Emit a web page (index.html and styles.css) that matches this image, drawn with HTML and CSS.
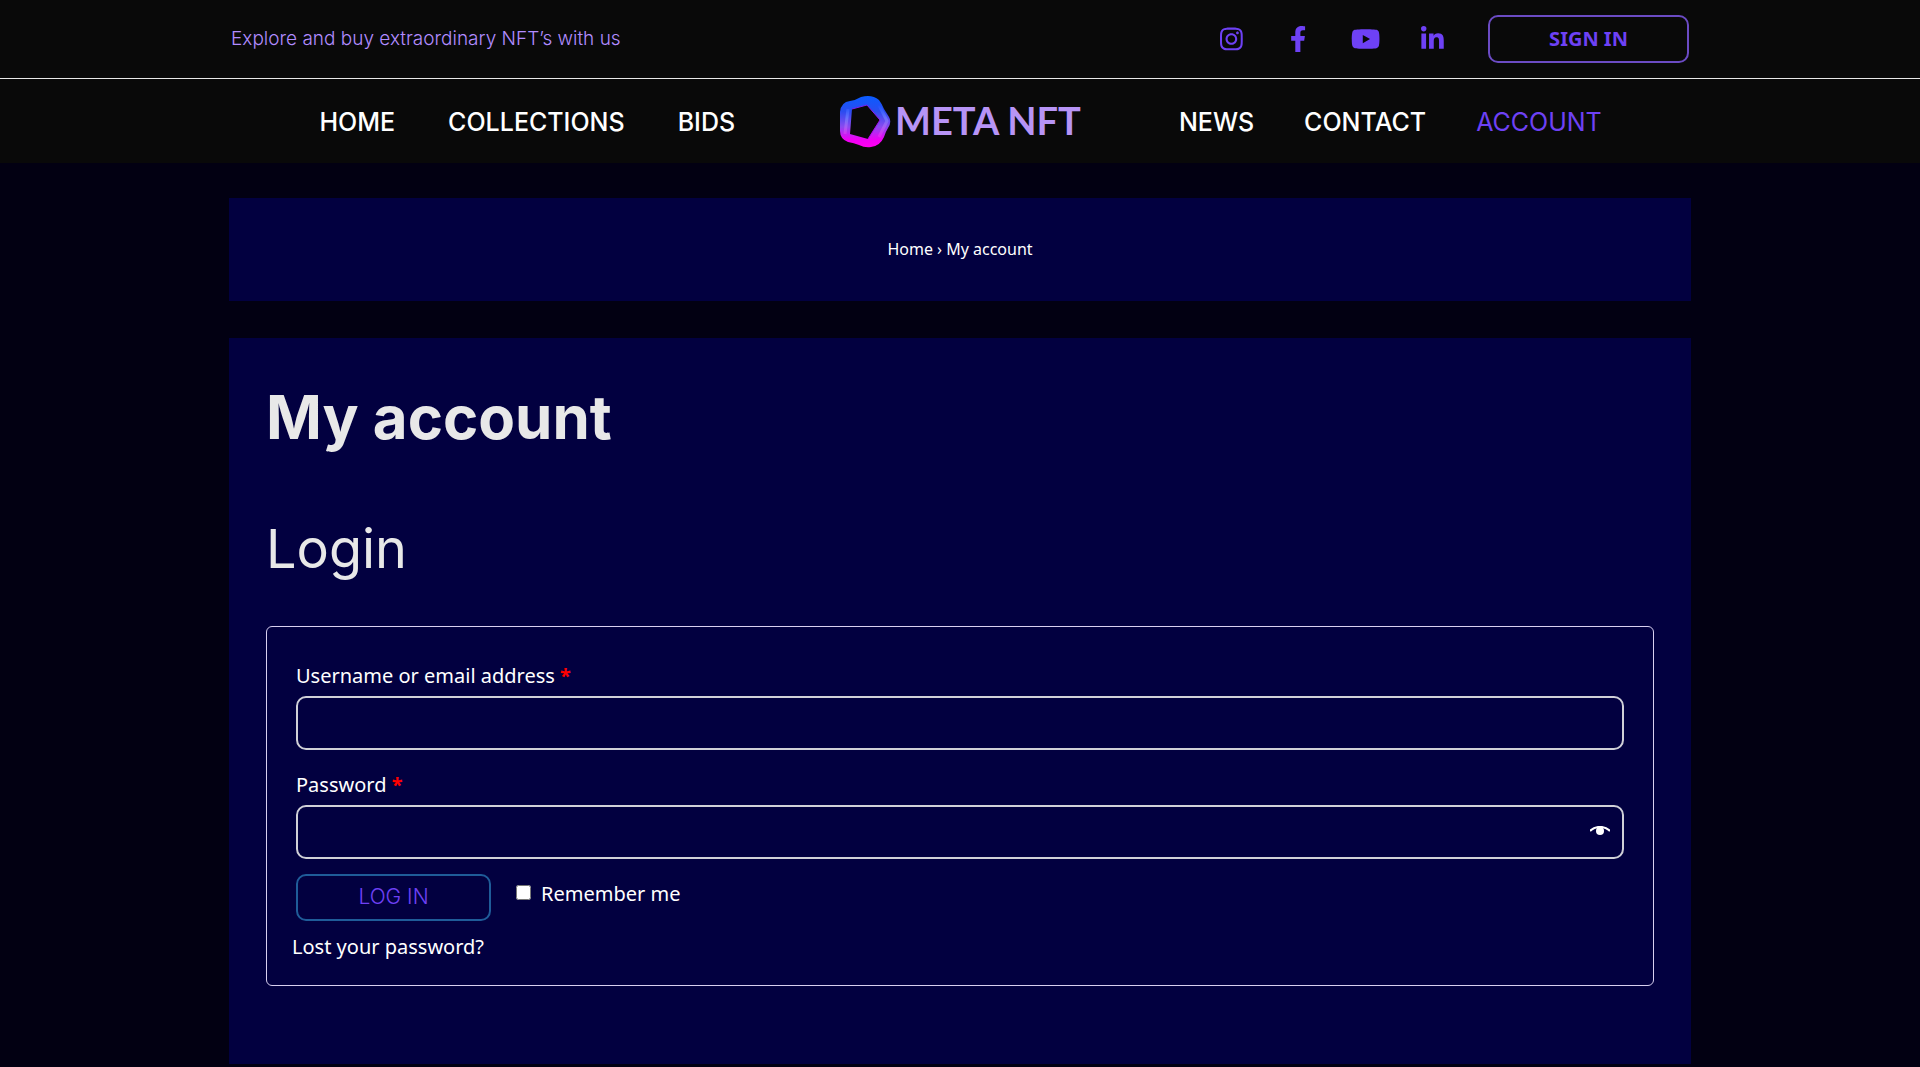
FILE: index.html
```html
<!DOCTYPE html>
<html lang="en">
<head>
  <meta charset="UTF-8">
  <title>My account - Meta NFT</title>
  <link rel="stylesheet" href="styles.css">
</head>
<body>

  <header>
    <div class="top-bar">
      <div class="container top-inner">
        <p class="tagline">Explore and buy extraordinary NFT’s with us</p>
        <div class="top-right">
          <div class="social">
            <a href="#" aria-label="Instagram">
              <svg viewBox="0 0 448 512"><path d="M224.1 141c-63.6 0-114.9 51.3-114.9 114.9s51.3 114.9 114.9 114.9S339 319.5 339 255.9 287.7 141 224.1 141zm0 189.6c-41.1 0-74.7-33.5-74.7-74.7s33.5-74.7 74.7-74.7 74.7 33.5 74.7 74.7-33.6 74.7-74.7 74.7zm146.4-194.3c0 14.9-12 26.8-26.8 26.8-14.9 0-26.8-12-26.8-26.8s12-26.8 26.8-26.8 26.8 12 26.8 26.8zm76.1 27.2c-1.7-35.9-9.9-67.7-36.2-93.9-26.2-26.2-58-34.4-93.9-36.2-37-2.1-147.9-2.1-184.9 0-35.8 1.7-67.6 9.9-93.9 36.1s-34.4 58-36.2 93.9c-2.1 37-2.1 147.9 0 184.9 1.7 35.9 9.9 67.7 36.2 93.9s58 34.4 93.9 36.2c37 2.1 147.9 2.1 184.9 0 35.9-1.7 67.7-9.9 93.9-36.2 26.2-26.2 34.4-58 36.2-93.9 2.1-37 2.1-147.8 0-184.8zM398.8 388c-7.8 19.6-22.9 34.7-42.6 42.6-29.5 11.7-99.5 9-132.1 9s-102.7 2.6-132.1-9c-19.6-7.8-34.7-22.9-42.6-42.6-11.7-29.5-9-99.5-9-132.1s-2.6-102.7 9-132.1c7.8-19.6 22.9-34.7 42.6-42.6 29.5-11.7 99.5-9 132.1-9s102.7-2.6 132.1 9c19.6 7.8 34.7 22.9 42.6 42.6 11.7 29.5 9 99.5 9 132.1s2.7 102.7-9 132.1z"/></svg>
            </a>
            <a href="#" aria-label="Facebook">
              <svg viewBox="0 0 320 512"><path d="M279.14 288l14.22-92.66h-88.91v-60.13c0-25.35 12.42-50.06 52.24-50.06h40.42V6.26S260.43 0 225.36 0c-73.22 0-121.08 44.38-121.08 124.72v70.62H22.89V288h81.39v224h100.17V288z"/></svg>
            </a>
            <a href="#" aria-label="YouTube">
              <svg viewBox="0 0 576 512"><path d="M549.655 124.083c-6.281-23.65-24.787-42.276-48.284-48.597C458.781 64 288 64 288 64S117.22 64 74.629 75.486c-23.497 6.322-42.003 24.947-48.284 48.597-11.412 42.867-11.412 132.305-11.412 132.305s0 89.438 11.412 132.305c6.281 23.65 24.787 41.5 48.284 47.821C117.22 448 288 448 288 448s170.78 0 213.371-11.486c23.497-6.321 42.003-24.171 48.284-47.821 11.412-42.867 11.412-132.305 11.412-132.305s0-89.438-11.412-132.305zm-317.51 213.508V175.185l142.739 81.205-142.739 81.201z"/></svg>
            </a>
            <a href="#" aria-label="LinkedIn">
              <svg viewBox="0 0 448 512"><path d="M100.28 448H7.4V148.9h92.88zM53.79 108.1C24.09 108.1 0 83.5 0 53.8a53.79 53.79 0 0 1 107.58 0c0 29.7-24.1 54.3-53.79 54.3zM447.9 448h-92.68V302.4c0-34.7-.7-79.2-48.29-79.2-48.29 0-55.69 37.7-55.69 76.7V448h-92.78V148.9h89.08v40.8h1.3c12.4-23.5 42.69-48.3 87.88-48.3 94 0 111.28 61.9 111.28 142.3V448z"/></svg>
            </a>
          </div>
          <button class="sign-in" type="button">SIGN IN</button>
        </div>
      </div>
    </div>

    <div class="container nav-bar">
      <nav class="nav-left">
        <a href="#">HOME</a>
        <a href="#">COLLECTIONS</a>
        <a href="#">BIDS</a>
      </nav>
      <a class="logo" href="#">
        <svg viewBox="0 0 52 52" aria-hidden="true">
          <defs>
            <linearGradient id="ring" x1="0" y1="0" x2="0" y2="1">
              <stop offset="0" stop-color="#0a5cff"/>
              <stop offset="0.3" stop-color="#2a4cf0"/>
              <stop offset="0.6" stop-color="#8a4af0"/>
              <stop offset="0.85" stop-color="#f000f5"/>
              <stop offset="1" stop-color="#ff00f0"/>
            </linearGradient>
            <linearGradient id="edge" x1="0" y1="0" x2="0" y2="1">
              <stop offset="0" stop-color="#1a50ff"/>
              <stop offset="0.4" stop-color="#6a7cff"/>
              <stop offset="0.7" stop-color="#b060f5"/>
              <stop offset="1" stop-color="#f020f5"/>
            </linearGradient>
            <linearGradient id="fold" x1="0" y1="0" x2="0" y2="1">
              <stop offset="0" stop-color="#7a20f0"/>
              <stop offset="1" stop-color="#c000f0"/>
            </linearGradient>
          </defs>
          <path fill="url(#ring)" fill-rule="evenodd" d="M1 16Q2 6 11 5Q17 4 22 1Q33 -2 40 4Q43 8 45 13L50 21Q53 26 49 32Q47 35 45 41Q41 50 32 51Q26 52 20 49Q15 47 9 46Q1 43 1 35ZM13 13L11 38L29 43L41 24L28 9Z"/>
          <path fill="none" stroke="url(#edge)" stroke-width="3" stroke-linejoin="round" opacity="0.8" d="M9 13L6 38M40 9L48 25L40 41"/>
          <path fill="none" stroke="url(#fold)" stroke-width="1" stroke-linejoin="round" d="M13 13L28 9L41 24L29 43"/>
        </svg>
        <span>META NFT</span>
      </a>
      <nav class="nav-right">
        <a href="#">NEWS</a>
        <a href="#">CONTACT</a>
        <a class="current" href="#">ACCOUNT</a>
      </nav>
    </div>
  </header>

  <main class="container">
    <div class="breadcrumb">
      <a href="#">Home</a> › <span>My account</span>
    </div>

    <section class="account">
      <h1>My account</h1>
      <h2>Login</h2>

      <form class="login">
        <label for="username">Username or email address <b>*</b></label>
        <input class="field" type="text" id="username">

        <label for="password">Password <b>*</b></label>
        <div class="password-wrap">
          <input class="field" type="password" id="password">
          <button class="show-password" type="button" aria-label="Show password">
            <svg viewBox="0 0 20 9"><path fill="none" stroke="#fff" stroke-width="2" d="M0 5C5 -0.5 15 -0.5 20 5"/><circle cx="10" cy="5" r="4" fill="#fff"/></svg>
          </button>
        </div>

        <div class="actions">
          <button class="log-in" type="submit">LOG IN</button>
          <input type="checkbox" id="remember">
          <label for="remember">Remember me</label>
        </div>
        <a class="lost" href="#">Lost your password?</a>
      </form>
    </section>
  </main>

</body>
</html>
```
FILE: styles.css
```css
* {
  box-sizing: border-box;
}

body {
  margin: 0;
  background-color: #020012;
  color: white;
  font-family: 'Noto Sans', sans-serif;
  font-size: 20px;
}

a {
  color: inherit;
  text-decoration: none;
}

.container {
  max-width: 1462px;
  margin: 0 auto;
}

header {
  background-color: #090909;
}

.top-bar {
  border-bottom: 1px solid #e8e8e8;
}

.top-inner {
  display: flex;
  justify-content: space-between;
  align-items: center;
  height: 78px;
  padding: 0 2px;
}

.tagline {
  margin: 0;
  padding-bottom: 2px;
  font-family: Inter, sans-serif;
  font-size: 19px;
  font-weight: 300;
  color: #b18cff;
}

.top-right {
  display: flex;
  align-items: center;
  gap: 22px;
}

.social {
  display: flex;
}

.social a {
  display: flex;
  justify-content: center;
  width: 67px;
}

.social svg {
  height: 26px;
  fill: #6e41f5;
}

.sign-in,
.log-in {
  padding: 0 0 2px;
  border: 2px solid #6b4bc4;
  border-radius: 10px;
  background: transparent;
  color: #6e41f5;
  cursor: pointer;
}

.sign-in {
  width: 201px;
  height: 48px;
  font-family: 'Noto Sans', sans-serif;
  font-size: 20px;
  font-weight: 700;
}

.nav-bar {
  display: grid;
  grid-template-columns: 1fr auto 1fr;
  align-items: center;
  column-gap: 50px;
  height: 84px;
  padding-top: 2px;
}

.nav-left,
.nav-right {
  display: flex;
  font-family: Inter, sans-serif;
  font-size: 25px;
  font-weight: 500;
}

.nav-left {
  justify-content: flex-end;
  gap: 53px;
  padding-right: 54px;
}

.nav-right {
  gap: 50px;
  padding-left: 48px;
}

.nav-right .current {
  color: #6e41f5;
  font-weight: 400;
}

.logo {
  display: flex;
  align-items: center;
  gap: 4px;
  font-family: Lato, sans-serif;
  font-size: 38px;
  font-weight: 700;
  line-height: 44px;
  color: #b794f6;
}

.logo svg {
  width: 52px;
  height: 52px;
}

.logo span {
  padding-bottom: 4px;
}

.breadcrumb {
  margin-top: 35px;
  padding: 40px;
  background-color: #020040;
  font-size: 16px;
  line-height: 23px;
  text-align: center;
}

.account {
  margin-top: 37px;
  padding: 37px 37px 78px;
  background-color: #020040;
}

.account h1,
.account h2 {
  margin: 0;
  color: #e8e8e8;
  font-family: Inter, sans-serif;
}

.account h1 {
  font-size: 60px;
  line-height: 84px;
}

.account h2 {
  margin-top: 54px;
  font-size: 54px;
  font-weight: 400;
  line-height: 72px;
}

.login {
  display: flex;
  flex-direction: column;
  align-items: flex-start;
  margin-top: 41px;
  padding: 29px 29px 24px;
  border: 1px solid #d8d0f0;
  border-radius: 6px;
}

.login label {
  line-height: 40px;
}

.login label b {
  color: red;
}

.field {
  width: 100%;
  height: 54px;
  margin-bottom: 15px;
  padding: 0 16px;
  border: 2px solid #d0d0d8;
  border-radius: 10px;
  background: transparent;
  color: white;
  font-size: 20px;
}

.password-wrap {
  position: relative;
  width: 100%;
}

.show-password {
  position: absolute;
  top: 21px;
  right: 14px;
  padding: 0;
  border: none;
  background: none;
  line-height: 0;
  cursor: pointer;
}

.show-password svg {
  width: 20px;
}

.actions {
  display: flex;
}

.log-in {
  width: 195px;
  height: 47px;
  margin-right: 25px;
  border-color: #1f5c99;
  font-family: Inter, sans-serif;
  font-size: 21px;
  font-weight: 300;
}

.actions input {
  width: 15px;
  height: 15px;
  margin: 11px 10px 0 0;
}

.lost {
  margin: 12px 0 0 -4px;
  line-height: 28px;
}
```
